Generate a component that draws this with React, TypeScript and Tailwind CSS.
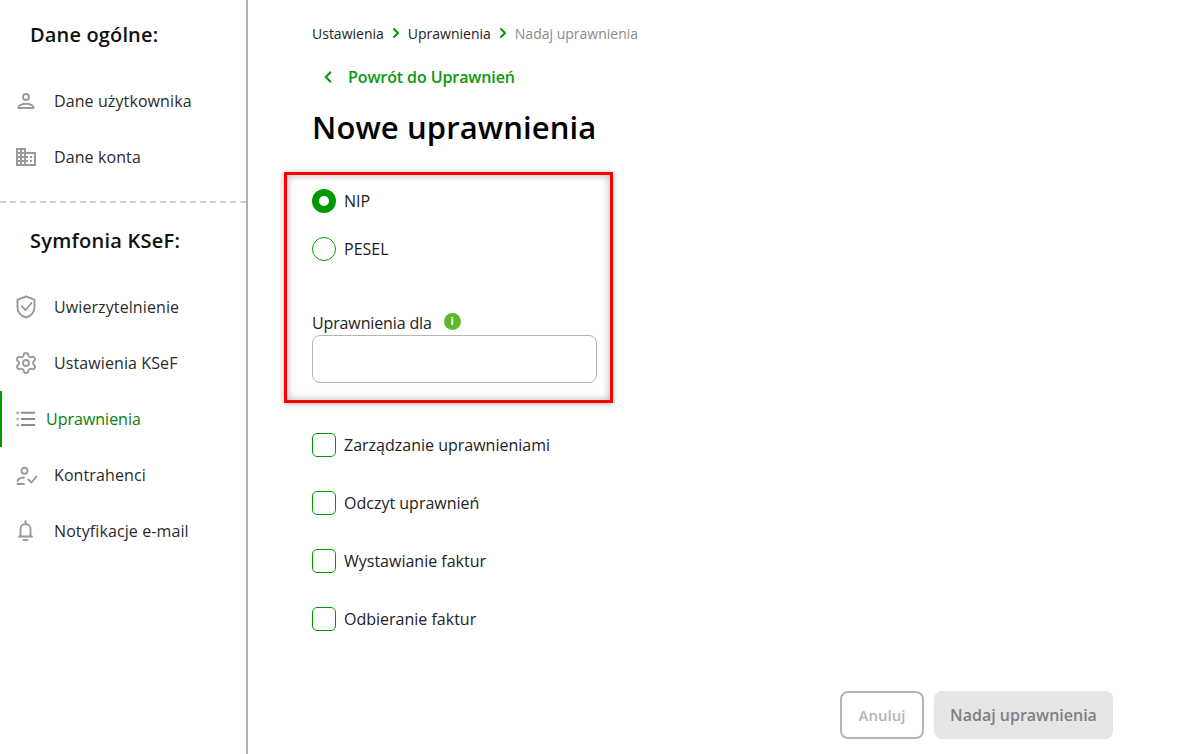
import { ChevronLeft, ChevronRight, Settings } from 'lucide-react'
import { MdOutlineDomain } from 'react-icons/md'
import type { ReactNode } from 'react'

const font = { fontFamily: '"Open Sans", sans-serif' }

function Icon({ children }: { children: ReactNode }) {
  return (
    <svg width="24" height="24" viewBox="0 0 24 24" fill="none" stroke="#9a9a9a" strokeWidth="1.9" strokeLinecap="round" strokeLinejoin="round">
      {children}
    </svg>
  )
}

function PersonIcon() {
  return (
    <Icon>
      <circle cx="12" cy="8" r="3" />
      <path d="M4.5 19v-.5c0-2 3.5-3.7 7.5-3.7s7.5 1.700 7.500 3.700v.5z" />
    </Icon>
  )
}

function ShieldIcon() {
  return (
    <Icon>
      <path d="M12 1.500l8.500 3.200v7.300c0 5-3.500 8.800-8.500 10.500-5-1.700-8.500-5.500-8.500-10.500V4.700z" />
      <path d="M8 11.500l3.500 3.500 6-7" />
    </Icon>
  )
}

function ListIcon() {
  return (
    <svg width="24" height="24" viewBox="0 0 24 24" fill="none">
      <circle cx="3.800" cy="5.800" r="1.600" fill="#b5b5b5" />
      <circle cx="3.800" cy="12" r="1.600" fill="#b5b5b5" />
      <circle cx="3.800" cy="18" r="1.600" fill="#b5b5b5" />
      <path d="M7 5.800h14M7 12h14M7 18h14" stroke="#8f8f8f" strokeWidth="2" />
    </svg>
  )
}

function ContractorIcon() {
  return (
    <Icon>
      <circle cx="10.500" cy="7.700" r="3" />
      <path d="M3.500 18c.5-2 3.500-3.300 6.500-3.500" />
      <path d="M3.500 21H10" />
      <path d="M14.500 16.500l3 3 5-6" />
    </Icon>
  )
}

function BellIcon() {
  return (
    <Icon>
      <path d="M11.500 2v1.500" />
      <path d="M5 17.500h13" />
      <path d="M6.500 17.500V10a5 5 0 0 1 10 0v7.500" />
      <path d="M9.500 21h4" />
    </Icon>
  )
}

function NavItem({ icon, label, active }: { icon: ReactNode; label: string; active?: boolean }) {
  return (
    <div className={`flex h-14 items-center ${active ? 'border-l-2 border-[#009a00] pl-[12px]' : 'pl-[14px]'}`}>
      <span className="flex w-[24px] shrink-0 justify-center text-[#9a9a9a]">{icon}</span>
      <span className={`text-[16px] ${active ? 'ml-[8px] text-[#0a7d0a]' : 'ml-[16px] tracking-[0.1px] text-[#2b2b2b]'}`}>{label}</span>
    </div>
  )
}

function Radio({ label, checked }: { label: string; checked?: boolean }) {
  return (
    <div className="flex h-6 items-center gap-2">
      {checked ? (
        <span className="flex size-6 items-center justify-center rounded-full bg-[#009a00]">
          <span className="size-2.5 rounded-full bg-white" />
        </span>
      ) : (
        <span className="size-6 rounded-full border border-[#009a00]" />
      )}
      <span className="text-[16px] text-[#222]">{label}</span>
    </div>
  )
}

function Check({ label }: { label: string }) {
  return (
    <div className="flex h-6 items-center gap-2">
      <span className="size-6 rounded-[5px] border border-[#009a00]" />
      <span className="text-[16px] text-[#222]">{label}</span>
    </div>
  )
}

export default function App() {
  return (
    <div className="flex h-[754px] w-[1179px] overflow-hidden bg-white" style={font}>
      <aside className="h-full w-[248px] shrink-0 border-r-2 border-[#b0b0b0]">
        <h2 className="pl-[30px] pt-[20px] text-[20px] leading-[30px] font-semibold tracking-[0.15px] text-[#111]">Dane ogólne:</h2>
        <div className="mt-[23px]">
          <NavItem icon={<PersonIcon />} label="Dane użytkownika" />
          <NavItem icon={<MdOutlineDomain size={24} />} label="Dane konta" />
        </div>
        <div className="mt-[16px] border-t-2 border-dashed border-[#d0d0d0]" />
        <h2 className="mt-[23px] pl-[30px] text-[20px] leading-[30px] font-semibold tracking-[0.25px] text-[#111]">Symfonia KSeF:</h2>
        <div className="mt-[23px]">
          <NavItem icon={<ShieldIcon />} label="Uwierzytelnienie" />
          <NavItem icon={<Settings size={24} strokeWidth={1.9} />} label="Ustawienia KSeF" />
          <NavItem active icon={<ListIcon />} label="Uprawnienia" />
          <NavItem icon={<ContractorIcon />} label="Kontrahenci" />
          <NavItem icon={<BellIcon />} label="Notyfikacje e-mail" />
        </div>
      </aside>

      <main className="flex min-w-0 flex-1 flex-col pl-[64px] pr-[66px]">
        <nav className="mt-[23px] flex h-5 items-center text-[14px] text-[#222]">
          <span>Ustawienia</span>
          <ChevronRight size={16} strokeWidth={3} className="mx-[4px] text-[#009a00]" />
          <span>Uprawnienia</span>
          <ChevronRight size={16} strokeWidth={3} className="mx-[4px] text-[#009a00]" />
          <span className="text-[#8a8a8a]">Nadaj uprawnienia</span>
        </nav>
        <div className="mt-[22px] flex h-6 items-center pl-[7px] text-[16px] font-semibold tracking-[-0.1px] text-[#0a9a0a]">
          <ChevronLeft size={18} strokeWidth={3} />
          <span className="ml-[11px]">Powrót do Uprawnień</span>
        </div>
        <h1 className="mt-[18px] h-[40px] text-[31px] leading-[40px] font-semibold tracking-[0.12px] text-black">Nowe uprawnienia</h1>

        <section className="mt-[25px] -ml-[28px] h-[231px] w-[329px] border-[3px] border-[#ff0000] pl-[25px] pr-[13px] pt-[14px] shadow-[0_1px_6px_rgba(0,0,0,0.3),inset_0_0_8px_rgba(0,0,0,0.3)]">
          <Radio checked label="NIP" />
          <div className="mt-6">
            <Radio label="PESEL" />
          </div>
          <div className="mt-[52px] flex h-5 items-center gap-[12px]">
            <label className="text-[16px] tracking-[-0.13px] text-[#222]">Uprawnienia dla</label>
            <span className="mb-1 flex size-[17px] items-center justify-center rounded-full bg-[#5cb82a] text-[11px] font-bold text-white">i</span>
          </div>
          <div className="mt-[2px] h-12 w-[285px] rounded-lg border border-[#b5b5b5]" />
        </section>

        <div className="mt-[30px] flex flex-col gap-[34px]">
          <Check label="Zarządzanie uprawnieniami" />
          <Check label="Odczyt uprawnień" />
          <Check label="Wystawianie faktur" />
          <Check label="Odbieranie faktur" />
        </div>

        <div className="mt-[60px] flex justify-end gap-[10px]">
          <button className="h-12 w-[84px] rounded-lg border-2 border-[#b5b5b5] bg-white text-[15px] font-semibold text-[#b5b5b5]">Anuluj</button>
          <button className="h-12 w-[179px] rounded-lg bg-[#e6e6e6] text-[16px] font-semibold text-[#7f7f7f]">Nadaj uprawnienia</button>
        </div>
      </main>
    </div>
  )
}
